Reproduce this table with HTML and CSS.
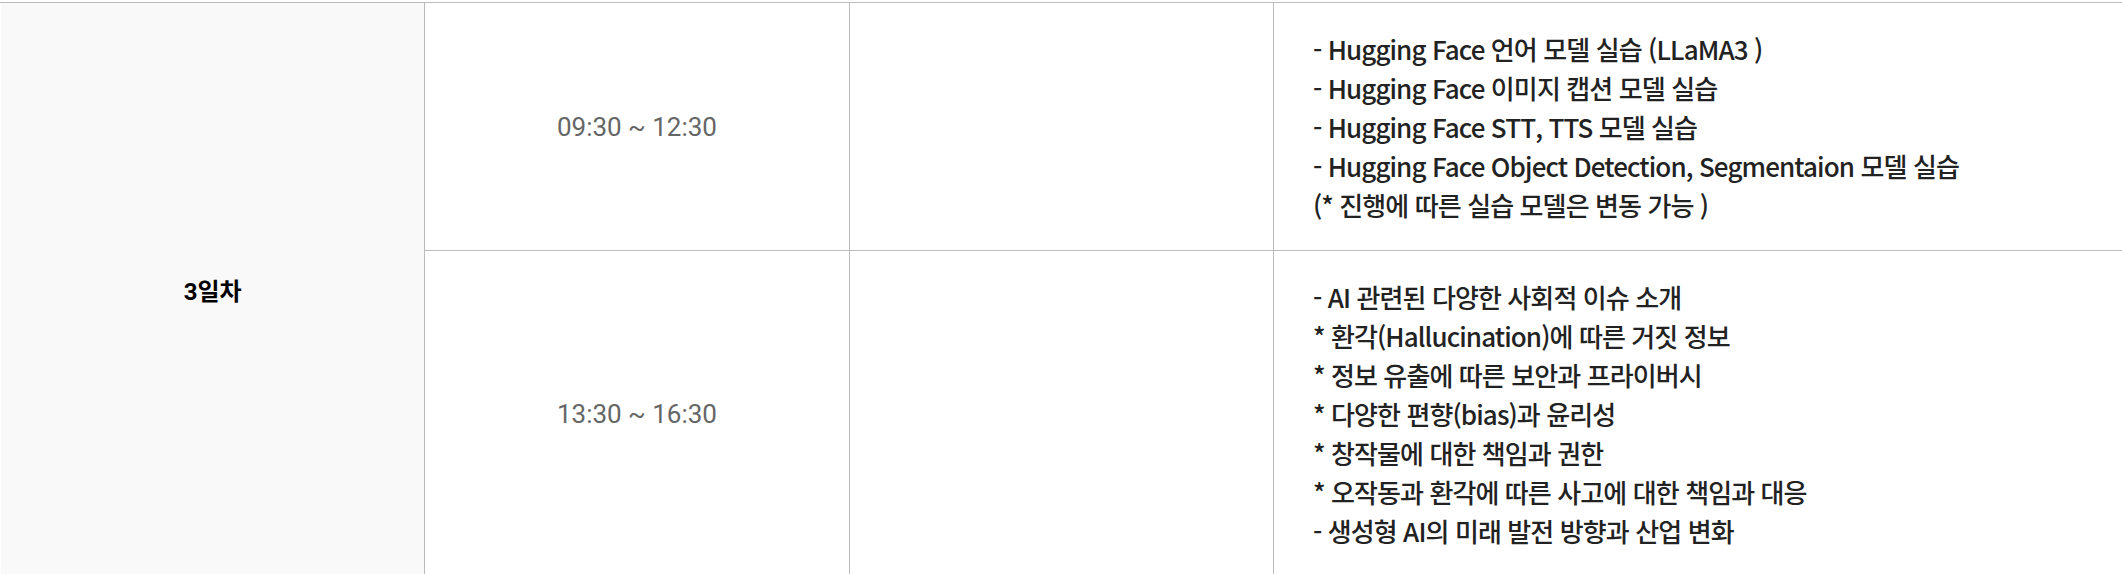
FILE: index.html
```html
<!DOCTYPE html>
<html lang="ko">
<head>
<meta charset="utf-8">
<title>3일차</title>
<link rel="stylesheet" href="styles.css">
</head>
<body>
<table class="schedule">
  <colgroup>
    <col class="col-day">
    <col class="col-time">
    <col class="col-empty">
    <col class="col-content">
  </colgroup>
  <tbody>
    <tr class="row-am">
      <th class="day" rowspan="2">3일차</th>
      <td class="time">09:30 ~ 12:30</td>
      <td class="blank"></td>
      <td class="content">
        <p>- Hugging Face 언어 모델 실습 (LLaMA3 )</p>
        <p>- Hugging Face 이미지 캡션 모델 실습</p>
        <p>- Hugging Face STT, TTS 모델 실습</p>
        <p>- Hugging Face Object Detection, Segmentaion 모델 실습</p>
        <p>(* 진행에 따른 실습 모델은 변동 가능 )</p>
      </td>
    </tr>
    <tr class="row-pm">
      <td class="time">13:30 ~ 16:30</td>
      <td class="blank"></td>
      <td class="content">
        <p>- AI 관련된 다양한 사회적 이슈 소개</p>
        <p>* 환각(Hallucination)에 따른 거짓 정보</p>
        <p>* 정보 유출에 따른 보안과 프라이버시</p>
        <p>* 다양한 편향(bias)과 윤리성</p>
        <p>* 창작물에 대한 책임과 권한</p>
        <p>* 오작동과 환각에 따른 사고에 대한 책임과 대응</p>
        <p>- 생성형 AI의 미래 발전 방향과 산업 변화</p>
      </td>
    </tr>
  </tbody>
</table>
</body>
</html>
```
FILE: styles.css
```css
html, body {
  margin: 0;
  padding: 0;
  background: #fff;
}

body {
  padding-top: 2px;
  font-family: "Noto Sans CJK KR", "Noto Sans", sans-serif;
}

.schedule {
  width: 100%;
  border-collapse: collapse;
  table-layout: fixed;
  border-top: 1px solid #bbb;
}

.col-day { width: 20%; }
.col-time { width: 20%; }
.col-empty { width: 20%; }
.col-content { width: 40%; }

.schedule th,
.schedule td {
  border: 1px solid #bbb;
  padding: 0;
  vertical-align: middle;
}

.schedule tr > :first-child {
  border-left: 1px solid #fff;
}

.schedule tr > :last-child {
  border-right: none;
}

.day {
  background: #f9f9f9;
  color: #000;
  font-family: "Roboto", "Noto Sans CJK KR", sans-serif;
  font-weight: 700;
  font-size: 24px;
  text-align: center;
}

.time {
  color: #666;
  font-family: "Roboto", "Noto Sans CJK KR", sans-serif;
  font-size: 26px;
  text-align: center;
}

.content {
  padding: 26px 20px 26px 39px !important;
  color: #222;
  font-size: 26px;
  font-weight: 500;
  line-height: 39px;
  letter-spacing: -0.9px;
}

.content p {
  margin: 0;
  white-space: nowrap;
}
```
